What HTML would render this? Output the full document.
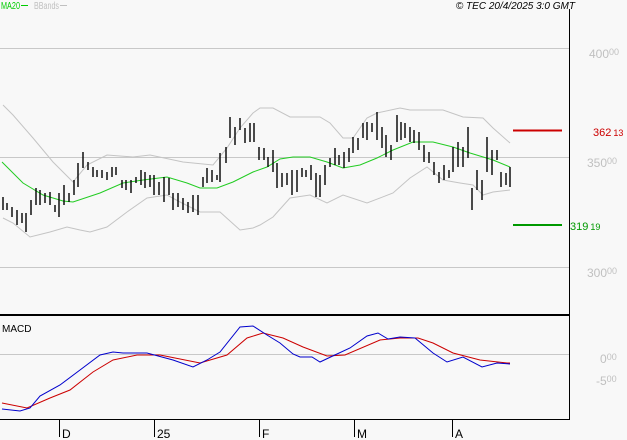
<!DOCTYPE html>
<html><head><style>
html,body{margin:0;padding:0;background:#f8f8f8;}
svg{display:block;}
text{font-family:"Liberation Sans",sans-serif;}
</style></head><body>
<svg width="627" height="440" viewBox="0 0 627 440" xmlns="http://www.w3.org/2000/svg">
<rect width="627" height="440" fill="#f8f8f8"/>
<g stroke="#c8c8c8" stroke-width="1">
<line x1="0" y1="48.5" x2="569" y2="48.5"/>
<line x1="0" y1="157.5" x2="569" y2="157.5"/>
<line x1="0" y1="267.5" x2="569" y2="267.5"/>
<line x1="0" y1="354.5" x2="569" y2="354.5"/>
</g>
<g fill="none" stroke="#c4c4c4" stroke-width="1">
<polyline points="3,105 13,115 33,138 53,162 73,182 87,165 107,155 133,157 150,155 183,162 213,165 227,148 240,128 253,113 260,108 273,108 290,117 320,117 330,123 343,138 353,138 367,118 377,113 400,108 410,110 443,110 463,117 483,118 493,128 510,143"/>
<polyline points="3,218 13,223 30,237 50,232 67,227 80,230 90,232 107,227 127,212 147,198 167,195 180,202 200,212 220,212 240,230 253,228 260,225 273,217 290,198 310,195 327,203 343,195 367,203 393,193 410,178 427,167 443,180 460,183 473,185 483,195 493,192 510,190"/>
</g>
<polyline fill="none" stroke="#22cc22" stroke-width="1" points="2,162 23,183 43,195 63,201 73,202 100,193 123,183 143,180 167,177 187,183 200,188 217,188 233,182 253,172 267,167 280,159 293,157 310,157 327,162 343,168 360,165 377,158 393,150 413,142 433,142 453,147 470,153 493,160 510,167"/>
<g stroke="#000" stroke-width="1">
<path d="M3,197V210M7,203V210M12,207V217M17,210V225M22,213V223M26,213V232M31,200V215M36,188V205M40,190V205M45,193V203M50,192V205M55,205V212M59,193V217M64,185V205M69,193V202M74,180V195M78,163V187M83,152V168M88,162V170M93,167V177M97,170V177M102,170V178M107,172V180M112,167V177M116,167V175M122,180V188M126,180V190M131,180V193M136,177V183M141,170V185M145,172V188M150,175V187M154,175V195M159,182V195M164,177V202M169,178V195M173,193V210M178,193V207M183,198V210M188,202V213M193,195V212M198,195V215M203,177V187M207,168V183M212,170V182M217,175V180M220,153V182M226,147V163M230,117V138M235,127V145M240,118V130M245,128V143M250,123V142M254,123V142M259,147V160M264,148V160M268,157V167M273,150V172M277,163V188M282,173V187M287,173V185M292,170V195M297,170V192M302,168V177M306,170V177M311,165V180M316,173V197M320,175V197M325,165V185M330,158V167M335,148V165M339,155V165M344,152V168M349,148V162M353,137V153M358,138V150M363,123V138M367,122V140M372,123V132M377,112V140M382,127V148M386,135V157M391,145V160M397,115V142M401,122V140M405,123V138M410,127V142M414,130V143M419,132V150M424,145V162M429,152V163M434,162V175M439,172V183M444,165V180M449,170V178M453,147V172M458,142V167M463,147V167M468,127V158M472,188V210M477,170V190M482,180V200M487,137V172M492,150V175M497,150V160M501,172V187M506,173V185M510,167V187" stroke-width="1.4"/>
</g>
<line x1="513" y1="130.5" x2="562" y2="130.5" stroke="#cc0000" stroke-width="2"/>
<line x1="513" y1="225" x2="562" y2="225" stroke="#009900" stroke-width="2"/>
<polyline fill="none" stroke="#cc0000" stroke-width="1" points="2,403 27,408 50,398 70,390 93,372 113,360 137,355 160,355 200,363 227,355 247,338 263,333 283,338 303,347 327,356 345,355 380,340 400,338 418,338 433,343 453,353 480,360 507,363 510,363"/>
<polyline fill="none" stroke="#0000cc" stroke-width="1" points="2,409 20,411 30,408 40,396 60,385 80,370 100,355 113,352 123,353 147,353 173,360 193,367 207,360 220,352 240,327 253,326 267,335 280,343 293,354 300,357 312,357 320,362 337,354 350,348 367,336 378,333 388,339 400,337 415,338 433,353 447,362 463,357 482,367 497,363 510,364"/>
<g stroke="#000">
<line x1="569.5" y1="9" x2="569.5" y2="420" stroke-width="1"/>
<line x1="0" y1="315" x2="570" y2="315" stroke-width="2"/>
<line x1="0" y1="419.5" x2="570" y2="419.5" stroke-width="1"/>
<path d="M59.5,419V437M154.5,419V437M259.5,419V437M354.5,419V437M452.5,419V437" stroke-width="1"/>
</g>
<g font-size="12" fill="#000">
<text x="62" y="438">D</text><text x="157" y="438">25</text><text x="262" y="438">F</text><text x="357" y="438">M</text><text x="455" y="438">A</text>
</g>
<text x="2" y="332" font-size="10" fill="#000">MACD</text>
<text x="1" y="9" font-size="10" fill="#00cc00" textLength="19" lengthAdjust="spacingAndGlyphs">MA20</text>
<line x1="21" y1="5.5" x2="28" y2="5.5" stroke="#00cc00" stroke-width="1"/>
<text x="34" y="9" font-size="10" fill="#c0c0c0" textLength="25" lengthAdjust="spacingAndGlyphs">BBands</text>
<line x1="60" y1="5.5" x2="67" y2="5.5" stroke="#c0c0c0" stroke-width="1"/>
<text x="575" y="9" font-size="10" font-style="italic" fill="#000" text-anchor="end">© TEC 20/4/2025 3:0 GMT</text>
<g fill="#c0c0c0" font-size="12">
<text x="589" y="58">400<tspan font-size="9" dy="-3">00</tspan></text>
<text x="587" y="167">350<tspan font-size="9" dy="-3">00</tspan></text>
<text x="587" y="277">300<tspan font-size="9" dy="-3">00</tspan></text>
<text x="600" y="363">0<tspan font-size="9" dy="-3">00</tspan></text>
<text x="596" y="385">-5<tspan font-size="9" dy="-3">00</tspan></text>
</g>
<text x="593" y="136" font-size="11" fill="#cc0000">362<tspan font-size="9" dx="2">13</tspan></text>
<text x="570" y="230" font-size="11" fill="#009900">319<tspan font-size="9" dx="2">19</tspan></text>
</svg>
</body></html>
